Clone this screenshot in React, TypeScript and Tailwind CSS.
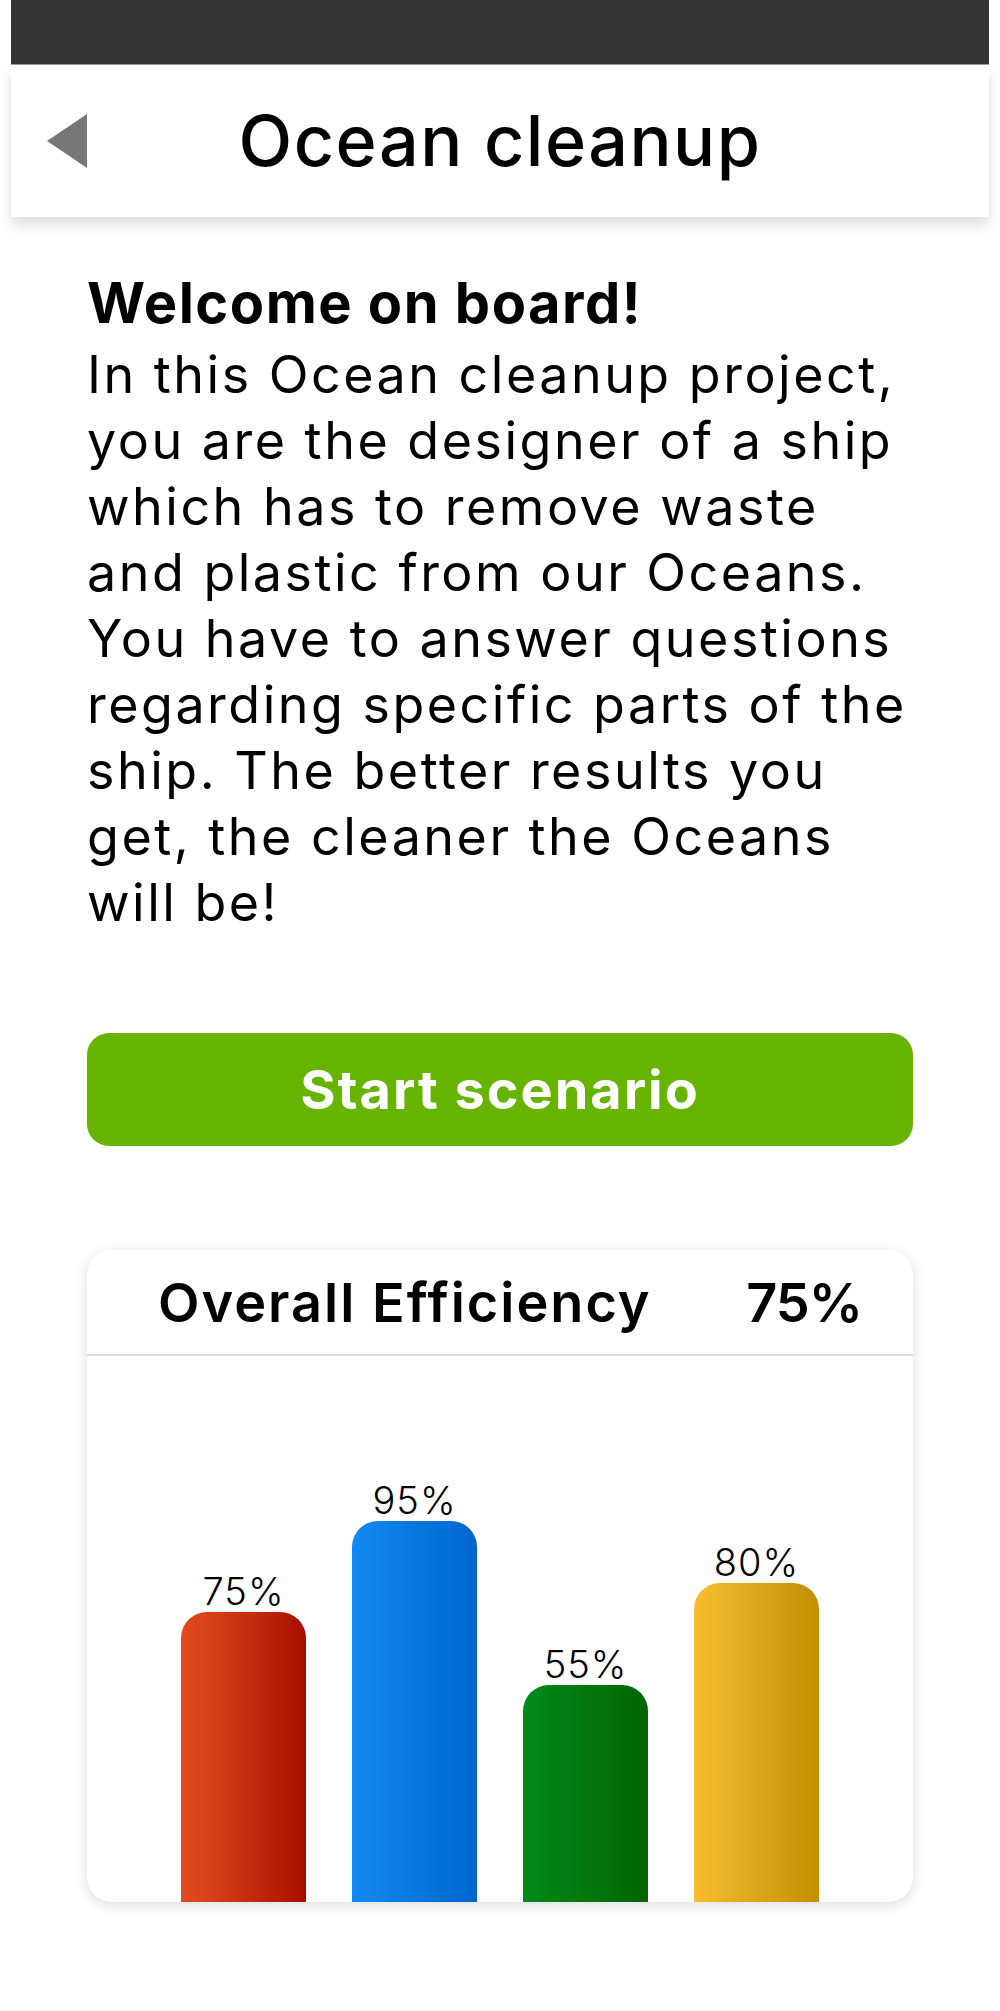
import React from 'react';

const intro = [
  'In this Ocean cleanup project,',
  'you are the designer of a ship',
  'which has to remove waste',
  'and plastic from our Oceans.',
  'You have to answer questions',
  'regarding specific parts of the',
  'ship. The better results you',
  'get, the cleaner the Oceans',
  'will be!',
];

const bars = [
  { label: '75%', height: 290, gradient: 'bg-gradient-to-r from-[#e44c1f] to-[#a80800]' },
  { label: '95%', height: 381, gradient: 'bg-gradient-to-r from-[#128af2] to-[#0066cc]' },
  { label: '55%', height: 217, gradient: 'bg-gradient-to-r from-[#028b1b] to-[#006400]' },
  { label: '80%', height: 319, gradient: 'bg-gradient-to-r from-[#f7be2f] to-[#c48e00]' },
];

function BackArrow() {
  return (
    <svg width="40" height="54" viewBox="0 0 40 54" aria-hidden="true">
      <polygon points="0,27 40,0 40,54" fill="#777777" />
    </svg>
  );
}

export default function App() {
  return (
    <div className="w-[1000px] min-h-[2011px] bg-white font-['Inter',sans-serif] text-black">
      {/* Status bar */}
      <div className="mx-[11px] h-[65px] bg-[#333333] border-b border-[#9a9a9a]" />

      {/* Top bar */}
      <header className="mx-[11px] h-[152px] bg-white grid grid-cols-[1fr_auto_1fr] items-center shadow-[0_8px_12px_rgba(0,0,0,0.13)]">
        <div className="pl-[36px] flex items-center">
          <BackArrow />
        </div>
        <h1 className="text-[70px] leading-none font-medium tracking-[1.5px]">Ocean cleanup</h1>
        <div />
      </header>

      <main className="px-[87px]">
        <div className="pt-[53px] text-[52px] leading-[66px]">
          <h2 className="font-bold text-[56px] tracking-[1.5px] mb-[6px]">Welcome on board!</h2>
          <p className="font-normal tracking-[2.5px]">
            {intro.map((line) => (
              <span key={line} className="block whitespace-nowrap">
                {line}
              </span>
            ))}
          </p>
        </div>

        <button className="mt-[97px] w-full h-[113px] rounded-[22px] bg-[#66b400] text-white text-[54px] font-bold tracking-[2px]">
          Start scenario
        </button>

        {/* Efficiency card */}
        <section className="mt-[104px] h-[652px] rounded-[25px] bg-white shadow-[0_3px_14px_rgba(0,0,0,0.14)] overflow-hidden flex flex-col">
          <div className="h-[106px] border-b-2 border-[#dadada] flex items-center justify-between pl-[71px] pr-[51px]">
            <span className="text-[54px] font-semibold tracking-[2px]">Overall Efficiency</span>
            <span className="text-[54px] font-semibold tracking-[-1px]">75%</span>
          </div>
          <div className="flex-1 flex items-end justify-center gap-[46px]">
            {bars.map((bar) => (
              <div key={bar.label} className="w-[125px] flex flex-col items-center">
                <span className="text-[38px] font-light leading-none tracking-[1px] mb-[2px]">{bar.label}</span>
                <div
                  className={`w-full rounded-t-[26px] ${bar.gradient}`}
                  style={{ height: bar.height }}
                />
              </div>
            ))}
          </div>
        </section>
      </main>
    </div>
  );
}
